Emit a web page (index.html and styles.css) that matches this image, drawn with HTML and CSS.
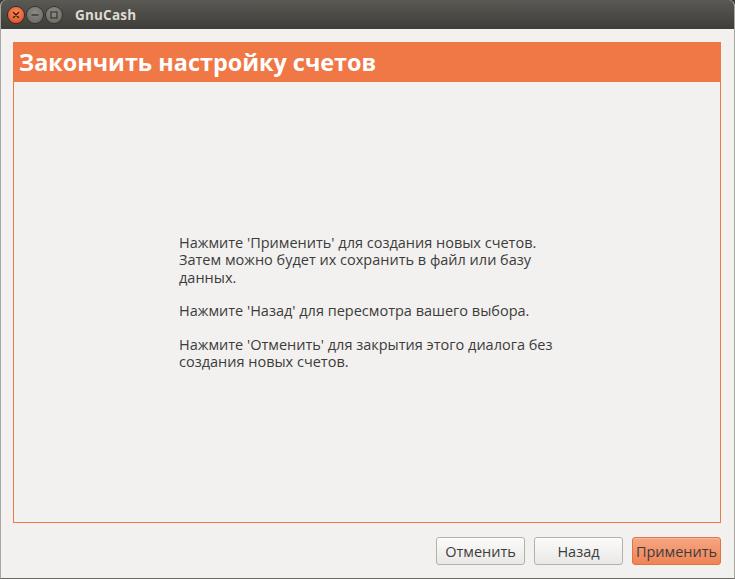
FILE: index.html
```html
<!DOCTYPE html>
<html lang="ru">
<head>
<meta charset="utf-8">
<title>GnuCash</title>
<link rel="stylesheet" href="styles.css">
</head>
<body>
<div class="window">
  <div class="titlebar">
    <div class="wbtns">
      <span class="wbtn close"><svg width="16" height="16" viewBox="0 0 16 16"><path d="M5.5 5.5 L10.5 10.5 M10.5 5.5 L5.5 10.5" stroke="#3a1a10" stroke-width="1.4" stroke-linecap="round"/></svg></span>
      <span class="wbtn"><svg width="16" height="16" viewBox="0 0 16 16"><path d="M4.5 8 H11.5" stroke="#3c3b37" stroke-width="1.4"/></svg></span>
      <span class="wbtn"><svg width="16" height="16" viewBox="0 0 16 16"><rect x="5" y="5" width="6" height="6" fill="none" stroke="#3c3b37" stroke-width="1.3"/></svg></span>
    </div>
    <span class="wtitle">GnuCash</span>
  </div>
  <div class="body">
    <div class="page">
      <div class="page-header">Закончить настройку счетов</div>
      <div class="page-content">
        <div class="message">
          <p>Нажмите 'Применить' для создания новых счетов.<br>Затем можно будет их сохранить в файл или базу<br>данных.</p>
          <p>Нажмите 'Назад' для пересмотра вашего выбора.</p>
          <p>Нажмите 'Отменить' для закрытия этого диалога без<br>создания новых счетов.</p>
        </div>
      </div>
    </div>
    <div class="actions">
      <button class="btn">Отменить</button>
      <button class="btn">Назад</button>
      <button class="btn primary">Применить</button>
    </div>
  </div>
</div>
</body>
</html>
```

FILE: styles.css
```css
html, body {
  margin: 0;
  padding: 0;
  background: #3c3b37;
}
body {
  width: 735px;
  height: 579px;
  overflow: hidden;
  font-family: "Open Sans", "DejaVu Sans", sans-serif;
}
.window {
  width: 735px;
  height: 579px;
  box-sizing: border-box;
  display: flex;
  flex-direction: column;
  background: #f2f1ef;
  border-radius: 6px 6px 0 0;
  overflow: hidden;
  border-left: 1px solid #a8a6a0;
  border-right: 1px solid #a8a6a0;
  border-bottom: 1px solid #6a6964;
}
.titlebar {
  height: 29px;
  flex: none;
  display: flex;
  align-items: center;
  background: linear-gradient(#5b5954, #3e3d39);
  padding-left: 7px;
}
.wbtns {
  display: flex;
  gap: 3px;
}
.wbtn {
  width: 16px;
  height: 16px;
  border-radius: 50%;
  display: flex;
  background: radial-gradient(circle at 50% 35%, #8d8b85, #67655f);
  box-shadow: 0 0 0 1px #34332f;
}
.wbtn.close {
  background: radial-gradient(circle at 50% 35%, #f68a60, #dd4a1c);
  box-shadow: 0 0 0 1px #3a2a22;
}
.wtitle {
  margin-left: 13px;
  color: #dfdbd2;
  font-weight: bold;
  font-size: 13.5px;
  letter-spacing: 0.2px;
}
.body {
  flex: 1;
  display: flex;
  flex-direction: column;
  padding: 13px 13px 0 12px;
}
.page {
  flex: 1;
  display: flex;
  flex-direction: column;
  border: 1px solid #f07746;
}
.page-header {
  background: #f07746;
  color: #ffffff;
  font-weight: bold;
  font-size: 23.4px;
  height: 39px;
  line-height: 39px;
  padding-left: 5px;
}
.page-content {
  flex: 1;
  display: flex;
  align-items: center;
  justify-content: center;
}
.message {
  width: 378px;
  color: #3c3c3c;
  font-size: 14.5px;
  line-height: 17.5px;
  margin-left: 2px;
}
.message p {
  margin: 0 0 16px 0;
}
.message p:last-child {
  margin-bottom: 0;
}
.actions {
  flex: none;
  display: flex;
  justify-content: flex-end;
  gap: 9px;
  padding: 14px 0 13px 0;
}
.btn {
  width: 89px;
  height: 28px;
  padding: 0;
  font-family: inherit;
  font-size: 14.5px;
  color: #3c3c3c;
  border: 1px solid #b4b1aa;
  border-radius: 3px;
  background: linear-gradient(#fbfbfa, #e9e8e5);
  box-shadow: inset 0 1px 0 #ffffff;
}
.btn.primary {
  border-color: #d8764c;
  background: linear-gradient(#f6a682, #ef8456);
  box-shadow: inset 0 1px 0 #f8b89a;
}
```
